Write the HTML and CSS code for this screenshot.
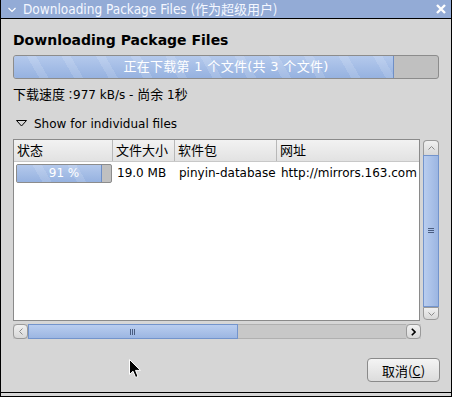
FILE: index.html
```html
<!DOCTYPE html>
<html lang="zh-CN">
<head>
    <meta charset="UTF-8">
    <title>Downloading Package Files</title>
    <link rel="stylesheet" href="styles.css">
</head>
<body>
    <div class="pencere">
        <div class="baslik">
            <svg class="ok" width="8" height="6" viewBox="0 0 8 6"><path d="M0.5 1 L4 4.5 L7.5 1" fill="none" stroke="#fff" stroke-width="1.2"/></svg>
            <span class="baslikYazi">Downloading Package Files <span class="zh">(作为超级用户)</span></span>
            <svg class="kapat" width="10" height="10" viewBox="0 0 10 10"><path d="M1 1 L9 9 M9 1 L1 9" stroke="#fff" stroke-width="2.4"/></svg>
        </div>

        <div class="icerik">
            <h1 class="anaBaslik">Downloading Package Files</h1>

            <div class="ilerleme">
                <div class="dolu" style="width: 89.7%"></div>
                <span class="ilerlemeYazi">正在下载第 1 个文件(共 3 个文件)</span>
            </div>

            <p class="hiz"><span class="zh">下载速度</span><span class="ikiNokta" lang="zh-TW">：</span>977 kB/s - <span class="zh">尚余</span> 1<span class="zh">秒</span></p>

            <div class="genislet">
                <svg width="11" height="7" viewBox="0 0 11 7"><path d="M0.5 0.5 L10.5 0.5 L5.5 6 Z" fill="none" stroke="#000" stroke-width="1"/></svg>
                <span>Show for individual files</span>
            </div>

            <div class="dosyalar">
                <div class="dosyaUst">
                    <div class="liste">
                        <div class="satir basliklar">
                            <div class="hucre">状态</div>
                            <div class="hucre">文件大小</div>
                            <div class="hucre">软件包</div>
                            <div class="hucre">网址</div>
                        </div>
                        <div class="satir">
                            <div class="hucre">
                                <div class="minibar">
                                    <div class="minidolu" style="width: 90%"></div>
                                    <span class="miniYazi">91 %</span>
                                </div>
                            </div>
                            <div class="hucre">19.0 MB</div>
                            <div class="hucre">pinyin-database</div>
                            <div class="hucre kes">http://mirrors.163.com</div>
                        </div>
                    </div>

                    <div class="dikey">
                        <div class="sbtn dikeyUst">
                            <svg width="7" height="4" viewBox="0 0 7 4"><path d="M0.5 3.5 L3.5 0.5 L6.5 3.5" fill="none" stroke="#8a8a8a"/></svg>
                        </div>
                        <div class="dikeyTutamak">
                            <svg width="6" height="6" viewBox="0 0 6 6"><path d="M0 0.5 H6 M0 2.5 H6 M0 4.5 H6" stroke="#4a5d80"/></svg>
                        </div>
                        <div class="sbtn dikeyAlt">
                            <svg width="7" height="4" viewBox="0 0 7 4"><path d="M0.5 0.5 L3.5 3.5 L6.5 0.5" fill="none" stroke="#8a8a8a"/></svg>
                        </div>
                    </div>
                </div>

                <div class="yatay">
                    <div class="sbtn yatayBtn">
                        <svg width="4" height="7" viewBox="0 0 4 7"><path d="M3.5 0.5 L0.5 3.5 L3.5 6.5" fill="none" stroke="#8a8a8a"/></svg>
                    </div>
                    <div class="yatayTutamak">
                        <svg width="6" height="6" viewBox="0 0 6 6"><path d="M0.5 0 V6 M2.5 0 V6 M4.5 0 V6" stroke="#4a5d80"/></svg>
                    </div>
                    <div class="bosluk"></div>
                    <div class="sbtn yatayBtn">
                        <svg width="5" height="8" viewBox="0 0 5 8"><path d="M0.8 0.8 L4 4 L0.8 7.2" fill="none" stroke="#000" stroke-width="1.6"/></svg>
                    </div>
                </div>
            </div>

            <div class="butonlar">
                <button class="iptal">取消(<u>C</u>)</button>
            </div>
        </div>

        <svg class="imlec" width="13" height="20" viewBox="0 0 13 20"><path d="M0.5 0.5 L0.5 15.5 L4 12.2 L6.6 18.5 L9 17.4 L6.5 11.4 L11.5 11.4 Z" fill="#000" stroke="#fff" stroke-width="1"/></svg>
    </div>
    <div class="altSerit"></div>
</body>
</html>
```

FILE: styles.css
```css
* {
    box-sizing: border-box;
}

body {
    margin: 0;
    width: 452px;
    height: 397px;
    background-color: #d6d6d6;
    font-family: "DejaVu Sans", "Noto Sans CJK SC", sans-serif;
    font-size: 12px;
    color: #000;
    overflow: hidden;
}

.zh {
    font-family: "Noto Sans CJK SC", sans-serif;
    font-size: 13px;
}

.pencere {
    position: relative;
    height: 393px;
    border-left: 1px solid #000;
    border-right: 1px solid #000;
    border-bottom: 1px solid #000;
    background-color: #d6d6d6;
}

.altSerit {
    height: 4px;
    border-left: 1px solid #000;
    border-right: 1px solid #000;
    border-bottom: 1px solid #000;
    background-color: #d6d6d6;
}

.baslik {
    height: 19px;
    display: flex;
    align-items: center;
    background-color: #93abd6;
    border-bottom: 1px solid #000;
    padding: 0 5px 1px 7px;
    color: #f4f7ff;
    font-family: "DejaVu Sans Condensed", "DejaVu Sans", sans-serif;
    font-size: 13.5px;
}

.ok {
    margin-right: 7px;
    margin-top: 2px;
}

.baslikYazi {
    flex: 1;
    white-space: nowrap;
}

.icerik {
    padding: 13px 12px 0 12px;
}

.anaBaslik {
    margin: 0;
    font-size: 14px;
    line-height: 17px;
    font-weight: bold;
}

.ilerleme {
    position: relative;
    margin-top: 6px;
    height: 24px;
    border: 1px solid #8c8c8c;
    border-radius: 3px;
    background-color: #c0c0c0;
    overflow: hidden;
}

.dolu,
.minidolu {
    position: absolute;
    left: 0;
    top: 0;
    bottom: 0;
    border-right: 1px solid #6f8fc6;
    background:
        repeating-linear-gradient(60deg, rgba(255, 255, 255, 0) 0 22px, rgba(255, 255, 255, 0.13) 22px 30px),
        linear-gradient(to bottom, #b4c9ec, #96b2e0);
}

.ilerlemeYazi {
    position: relative;
    display: block;
    text-align: center;
    line-height: 22px;
    color: #fff;
    font-size: 13px;
    letter-spacing: 0.3px;
}

.hiz {
    margin: 7px 0 0 0;
    line-height: 15px;
    white-space: nowrap;
}

.ikiNokta {
    font-family: "Noto Sans CJK TC", sans-serif;
    font-size: 11px;
    letter-spacing: -3px;
}

.genislet {
    margin-top: 13px;
    height: 15px;
    display: flex;
    align-items: center;
    padding-left: 3px;
}

.genislet svg {
    margin-right: 7px;
}

.dosyalar {
    margin-top: 8px;
}

.dosyaUst {
    display: flex;
    gap: 3px;
}

.liste {
    width: 408px;
    height: 182px;
    background-color: #fff;
    border: 1px solid #8a8a8a;
    overflow: hidden;
}

.satir {
    display: grid;
    grid-template-columns: 99px 62px 102px 1fr;
}

.basliklar {
    height: 22px;
    background: linear-gradient(to bottom, #f2f2f2, #e2e2e2);
    border-bottom: 1px solid #c8c8c8;
    font-size: 13px;
}

.basliklar .hucre {
    line-height: 21px;
    padding-left: 3px;
    border-right: 1px solid #b8b8b8;
}

.basliklar .hucre:last-child {
    border-right: none;
}

.satir .hucre {
    white-space: nowrap;
    overflow: hidden;
}

.satir:not(.basliklar) {
    height: 22px;
    align-items: center;
}

.satir:not(.basliklar) .hucre {
    padding-left: 4px;
    line-height: 20px;
}

.satir:not(.basliklar) .hucre:first-child {
    padding-left: 2px;
}

.minibar {
    position: relative;
    width: 96px;
    height: 19px;
    border: 1px solid #8c8c8c;
    border-radius: 2px;
    background-color: #c0c0c0;
    overflow: hidden;
}

.miniYazi {
    position: relative;
    display: block;
    text-align: center;
    line-height: 17px;
    color: #fff;
}

.dikey {
    width: 16px;
    height: 180px;
    margin-top: 1px;
    display: flex;
    flex-direction: column;
}

.sbtn {
    display: flex;
    align-items: center;
    justify-content: center;
    background: linear-gradient(to bottom, #f0f0f0, #d8d8d8);
    border: 1px solid #9a9a9a;
}

.dikeyUst {
    height: 15px;
    border-radius: 4px 4px 0 0;
    border-bottom: none;
}

.dikeyAlt {
    height: 13px;
    border-radius: 0 0 4px 4px;
}

.dikeyTutamak {
    flex: 1;
    display: flex;
    align-items: center;
    justify-content: center;
    border: 1px solid #7394cc;
    background: linear-gradient(to right, #b9cdef, #9cb6e2);
}

.yatay {
    margin-top: 3px;
    width: 408px;
    height: 15px;
    display: flex;
    background-color: #c8c8c8;
}

.yatayBtn {
    width: 15px;
    border-radius: 4px;
}

.yatayTutamak {
    width: 210px;
    display: flex;
    align-items: center;
    justify-content: center;
    border: 1px solid #7394cc;
    background: linear-gradient(to bottom, #b9cdef, #9cb6e2);
}

.bosluk {
    flex: 1;
    border-top: 1px solid #b0b0b0;
    border-bottom: 1px solid #b0b0b0;
}

.butonlar {
    margin-top: 19px;
    display: flex;
    justify-content: flex-end;
}

.iptal {
    width: 73px;
    height: 24px;
    margin-right: -1px;
    font-family: "Noto Sans CJK SC", sans-serif;
    font-size: 13px;
    color: #000;
    border: 1px solid #8a8a8a;
    border-radius: 4px;
    background: linear-gradient(to bottom, #f4f4f4, #dcdcdc);
    padding: 0;
}

.imlec {
    position: absolute;
    left: 128px;
    top: 359px;
}
```
